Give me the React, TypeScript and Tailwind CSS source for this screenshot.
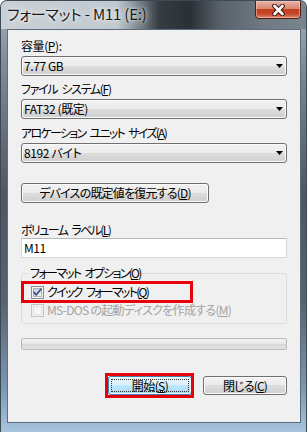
import React from "react";

const FONT = "[font-family:'Noto_Sans_CJK_JP',sans-serif] [font-feature-settings:'palt']";

function Sp() {
  return <span className="inline-block w-[4px]" />;
}

function Arrow() {
  return (
    <svg width="7" height="4" viewBox="0 0 7 4">
      <path d="M0 0H7L3.5 4Z" fill="#000" />
    </svg>
  );
}

function Combo({ children }: { children: React.ReactNode }) {
  return (
    <div className="h-[20px] rounded-[3px] border border-[#707070] bg-[linear-gradient(to_bottom,#f2f2f2_0%,#ebebeb_50%,#dddddd_50%,#cfcfcf_100%)] shadow-[inset_0_0_0_1px_#fbfbfb] flex items-center justify-between pl-[2px] pr-[3px] text-[12px] leading-[16px]">
      <span className="tracking-[-0.4px]">{children}</span>
      <Arrow />
    </div>
  );
}

function Label({ children, className = "" }: { children: React.ReactNode; className?: string }) {
  return <div className={"h-[16px] text-[12px] leading-[16px] whitespace-nowrap " + className}>{children}</div>;
}

function CheckBox({ checked, disabled }: { checked?: boolean; disabled?: boolean }) {
  const border = disabled ? "#c4c4c4" : "#8e8f8f";
  return (
    <svg width="13" height="13" viewBox="0 0 13 13" className="shrink-0">
      <defs>
        <linearGradient id={disabled ? "cbd" : "cbe"} x1="0" y1="0" x2="1" y2="1">
          <stop offset="0" stopColor={disabled ? "#f2f2f2" : "#cbcfd5"} />
          <stop offset="1" stopColor={disabled ? "#fafafa" : "#f6f6f6"} />
        </linearGradient>
      </defs>
      <rect x="0.5" y="0.5" width="12" height="12" fill="#f4f4f4" stroke={border} />
      <rect x="2.5" y="2.5" width="8" height="8" fill={`url(#${disabled ? "cbd" : "cbe"})`} stroke={disabled ? "#e0e0e0" : "#aeb3b9"} />
      {checked && (
        <path d="M3 6.3L5.2 8.8L10 3.2" fill="none" stroke="#3f5791" strokeWidth="1.8" strokeLinecap="round" strokeLinejoin="round" />
      )}
    </svg>
  );
}

function Button({
  children,
  className = "",
  isDefault,
}: {
  children: React.ReactNode;
  className?: string;
  isDefault?: boolean;
}) {
  if (isDefault) {
    return (
      <div
        className={
          "h-[19px] rounded-[3px] border border-[#3c7fb1] bg-[linear-gradient(to_bottom,#eaf6fd_0%,#d9f0fc_50%,#bee6fd_50%,#a7d9f5_100%)] shadow-[inset_0_0_0_1px_#f4fbfe] p-[2px] " +
          className
        }
      >
        <div className="h-full border border-dotted border-[#333] flex items-center justify-center text-[12px] leading-[16px] tracking-[-0.6px]">
          {children}
        </div>
      </div>
    );
  }
  return (
    <div
      className={
        "h-[19px] rounded-[3px] border border-[#707070] bg-[linear-gradient(to_bottom,#f2f2f2_0%,#ebebeb_50%,#dddddd_50%,#cfcfcf_100%)] shadow-[inset_0_0_0_1px_#fbfbfb] flex items-center justify-center text-[12px] leading-[16px] " +
        className
      }
    >
      {children}
    </div>
  );
}

export default function App() {
  return (
    <div className={"w-[307px] h-[432px] bg-white " + FONT}>
      <div className="w-[307px] h-[432px] rounded-t-[7px] overflow-hidden flex flex-col bg-[linear-gradient(to_bottom,#a9b3bb_0%,#7f8a93_15%,#4f575e_45%,#58636e_70%,#7c98b5_90%,#a8c4de_100%)] border border-[#3d4a57] border-b-0">
        {/* Title bar */}
        <div className="h-[28px] shrink-0 flex justify-between bg-[linear-gradient(to_right,#c9d1d7_0%,#c0c9cf_38%,#7d868e_45%,#343b41_52%,#2a3036_62%,#59626a_72%,#6f7981_86%,#7a848c_100%)]">
          <div className="pl-[6px] pt-[3px] text-[15px] leading-[20px] tracking-[-0.2px] text-[#1a1a1a] [text-shadow:0_0_7px_rgba(255,255,255,0.95),0_0_3px_rgba(255,255,255,0.8)] whitespace-nowrap">
            フォーマット - M11 (E:)
          </div>
          <div className="mr-[5px] w-[46px] h-[19px] mt-[-1px] rounded-b-[4px] border border-[#4b2016] bg-[linear-gradient(to_bottom,#e8b2a5_0%,#d98670_45%,#c2401f_50%,#c64729_75%,#e08a6c_100%)] shadow-[inset_0_0_0_1px_rgba(255,220,210,0.45)] flex items-center justify-center">
            <svg width="15" height="12" viewBox="0 0 15 12">
              <path d="M3.5 2L11.5 10M11.5 2L3.5 10" stroke="#3a1a12" strokeWidth="4.6" strokeLinecap="round" />
              <path d="M3.5 2L11.5 10M11.5 2L3.5 10" stroke="#ffffff" strokeWidth="2.6" strokeLinecap="round" />
            </svg>
          </div>
        </div>

        {/* Frame body */}
        <div className="flex-1 flex flex-col pl-[6px] pr-[5px] pb-[9px]">
          <div className="flex-1 border border-[#5c6c7c] bg-[#f0f0f0] px-[13px] pt-[8px] flex flex-col text-black">
            <Label className="tracking-[-0.4px]">
              容量(<u>P</u>):
            </Label>
            <div className="mt-[2px]">
              <Combo>7.77 GB</Combo>
            </div>

            <Label className="mt-[5px] tracking-[-1.3px]">
              ファイル<Sp />システム(<u>F</u>)
            </Label>
            <div className="mt-[2px]">
              <Combo>FAT32 (既定)</Combo>
            </div>

            <Label className="mt-[6px] tracking-[-1.7px]">
              アロケーション<Sp />ユニット<Sp />サイズ(<u>A</u>)
            </Label>
            <div className="mt-[2px]">
              <Combo>8192 バイト</Combo>
            </div>

            <Button className="mt-[20px] w-[188px] h-[20px] tracking-[-0.8px]">
              デバイスの既定値を復元する(<u>D</u>)
            </Button>

            <Label className="mt-[19px] tracking-[-1.6px]">
              ボリューム<Sp />ラベル(<u>L</u>)
            </Label>
            <div className="h-[20px] bg-white border border-[#d5d9de] border-t-[#b3b7bd] flex items-center pl-[2px] text-[12px] leading-[16px] tracking-[-0.4px]">
              M11
            </div>

            <fieldset className="mt-[7px] border border-[#d5dfe5] rounded-[3px] px-[9px] pb-[5px]">
              <legend className="ml-[-2px] px-[1px] text-[12px] leading-[16px] tracking-[-1.7px] whitespace-nowrap">
                フォーマット<Sp />オプション(<u>O</u>)
              </legend>
              <div className="relative mt-[3px] h-[16px] flex items-center">
                <CheckBox checked />
                <span className="ml-[3px] text-[12px] leading-[16px] tracking-[-1.7px] whitespace-nowrap">
                  クイック<Sp />フォーマット(<u>Q</u>)
                </span>
                <div className="absolute left-[-10px] top-[-3px] w-[172px] h-[22px] border-[3px] border-[#e8000b]" />
              </div>
              <div className="mt-[2px] h-[16px] flex items-center text-[#a3a3a3]">
                <CheckBox disabled />
                <span className="ml-[3px] text-[12px] leading-[16px] tracking-[-0.7px] whitespace-nowrap">
                  MS-DOS の起動ディスクを作成する(<u>M</u>)
                </span>
              </div>
            </fieldset>

            <div className="mt-[14px] h-[12px] rounded-[2px] border border-[#bcbcbc] bg-[linear-gradient(to_bottom,#f4f4f4_0%,#e6e6e6_50%,#d6d6d6_50%,#e2e2e2_100%)]" />

            <div className="mt-[26px] flex justify-end gap-[11px]">
              <div className="relative">
                <Button isDefault className="w-[84px]">
                  開始(<u>S</u>)
                </Button>
                <div className="absolute left-[-3px] top-[-3px] right-[-2px] bottom-[-3px] border-[3px] border-[#e8000b]" />
              </div>
              <Button className="w-[84px] tracking-[-0.8px]">
                閉じる(<u>C</u>)
              </Button>
            </div>
          </div>
        </div>
      </div>
    </div>
  );
}
